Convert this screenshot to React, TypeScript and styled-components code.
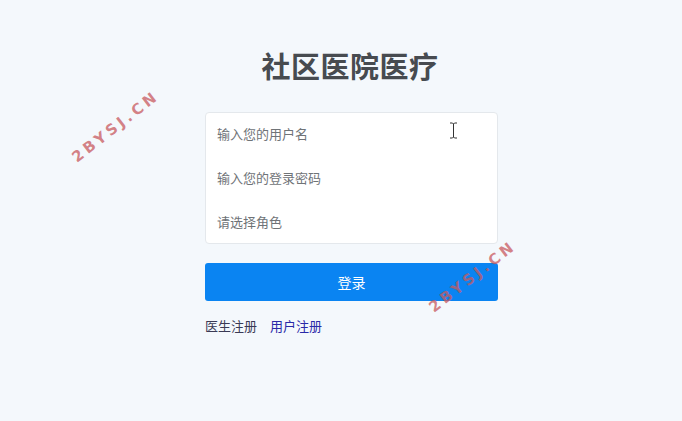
import React from 'react';
import styled, {createGlobalStyle} from 'styled-components';

const GlobalStyle = createGlobalStyle`
  html, body {
    margin: 0;
    padding: 0;
    background: #f4f8fc;
  }
  body {
    font-family: "Noto Sans CJK SC", "Liberation Sans", sans-serif;
  }
`;

const Page = styled.div`
  position: relative;
  width: 682px;
  height: 421px;
  overflow: hidden;
  background: #f4f8fc;
  display: flex;
  flex-direction: column;
  align-items: center;
`;

const Title = styled.h1`
  margin: 45px 0 0 18px;
  height: 40px;
  font-size: 29px;
  line-height: 40px;
  font-weight: 700;
  color: #474b50;
  letter-spacing: 0.5px;
`;

const Form = styled.div`
  width: 293px;
  margin: 27px 0 0 21px;
  display: flex;
  flex-direction: column;
`;

const Card = styled.div`
  background: #fff;
  border: 1px solid #e4e8ec;
  border-radius: 4px;
  display: flex;
  flex-direction: column;
  height: 130px;
`;

const Field = styled.input`
  border: none;
  outline: none;
  background: transparent;
  height: 44px;
  padding: 0 11px 4px;
  font-family: inherit;
  font-size: 13px;
  color: #333;

  &::placeholder {
    color: #6f7377;
  }
`;

const Select = styled.div`
  height: 42px;
  padding: 0 11px 2px;
  display: flex;
  align-items: center;
  font-size: 13px;
  color: #6f7377;
`;

const Button = styled.button`
  margin-top: 19px;
  height: 38px;
  border: none;
  border-radius: 3px;
  background: #0a84f2;
  color: #fff;
  font-family: inherit;
  font-size: 14px;
  cursor: pointer;
`;

const Links = styled.div`
  margin-top: 15px;
  display: flex;
  gap: 13px;
  font-size: 13px;
`;

const Link = styled.a<{ $primary?: boolean }>`
  color: ${p => (p.$primary ? '#2a2aa8' : '#3a3a55')};
  text-decoration: none;
  cursor: pointer;
`;

const Watermark = styled.div<{ $x: number; $y: number }>`
  position: absolute;
  left: ${p => p.$x}px;
  top: ${p => p.$y}px;
  transform: rotate(-38deg);
  transform-origin: left center;
  font-family: "DejaVu Sans", sans-serif;
  font-size: 15px;
  font-weight: 700;
  letter-spacing: 3.5px;
  color: rgba(200, 90, 95, 0.75);
  pointer-events: none;
  white-space: nowrap;
`;

const Caret = styled.svg`
  position: absolute;
  left: 449px;
  top: 122px;
`;

export default function App() {
    return (
        <>
            <GlobalStyle/>
            <Page>
                <Title>社区医院医疗</Title>
                <Form>
                    <Card>
                        <Field placeholder="输入您的用户名"/>
                        <Field type="password" placeholder="输入您的登录密码"/>
                        <Select>请选择角色</Select>
                    </Card>
                    <Button>登录</Button>
                    <Links>
                        <Link>医生注册</Link>
                        <Link $primary>用户注册</Link>
                    </Links>
                </Form>
                <Watermark $x={74} $y={150}>2BYSJ.CN</Watermark>
                <Watermark $x={431} $y={300}>2BYSJ.CN</Watermark>
                <Caret width="9" height="17" viewBox="0 0 9 17">
                    <path d="M1 1h2.5L4.5 2l1-1H8M4.5 2v13M1 16h2.5l1-1 1 1H8" fill="none" stroke="#333" strokeWidth="1"/>
                </Caret>
            </Page>
        </>
    );
}
